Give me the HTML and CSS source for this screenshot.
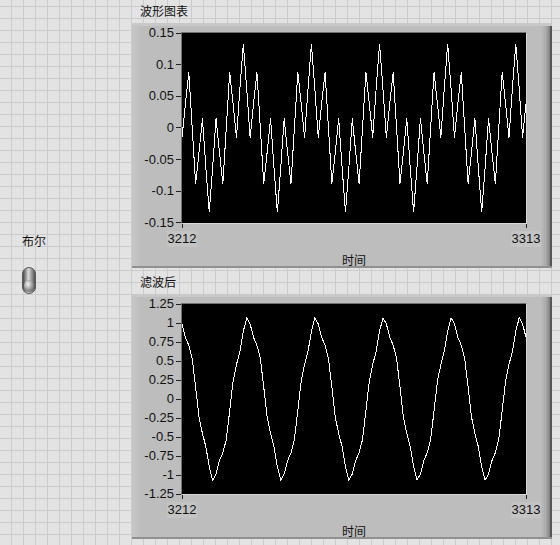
FILE: index.html
```html
<!DOCTYPE html>
<html lang="zh">
<head>
<meta charset="utf-8">
<title>前面板</title>
<link rel="stylesheet" href="styles.css">
</head>
<body>
<div class="panel">
  <div class="side">
    <div class="bool-label">布尔</div>
    <svg class="toggle" viewBox="0 0 14 27" width="14" height="27">
      <defs>
        <linearGradient id="metal" x1="0" x2="1" y1="0" y2="0">
          <stop offset="0" stop-color="#3a3a3a"/>
          <stop offset="0.45" stop-color="#dadada"/>
          <stop offset="1" stop-color="#484848"/>
        </linearGradient>
        <radialGradient id="knob" cx="0.4" cy="0.35" r="0.7">
          <stop offset="0" stop-color="#f4f4f4"/>
          <stop offset="1" stop-color="#666"/>
        </radialGradient>
      </defs>
      <rect x="0.5" y="0.5" width="13" height="26" rx="6.5" fill="url(#metal)" stroke="#5a5a5a"/>
      <ellipse cx="7" cy="19" rx="5" ry="6" fill="url(#knob)"/>
    </svg>
  </div>
  <div class="charts">
    <section class="chart">
      <div class="chart-label">波形图表</div>
      <div class="frame">
        <div class="yaxis">
          <div class="ylab">0.15</div>
          <div class="ylab">0.1</div>
          <div class="ylab">0.05</div>
          <div class="ylab">0</div>
          <div class="ylab">-0.05</div>
          <div class="ylab">-0.1</div>
          <div class="ylab">-0.15</div>
        </div>
        <div class="plot">
          <svg viewBox="0 0 344 190" width="344" height="190">
            <polyline id="line1" class="trace" points=""/>
          </svg>
        </div>
        <div class="xaxis">
          <div class="xlab"><span>3212</span></div>
          <div class="xlab"><span>3313</span></div>
        </div>
        <div class="xtitle">时间</div>
      </div>
    </section>
    <section class="chart">
      <div class="chart-label">滤波后</div>
      <div class="frame">
        <div class="yaxis">
          <div class="ylab">1.25</div>
          <div class="ylab">1</div>
          <div class="ylab">0.75</div>
          <div class="ylab">0.5</div>
          <div class="ylab">0.25</div>
          <div class="ylab">0</div>
          <div class="ylab">-0.25</div>
          <div class="ylab">-0.5</div>
          <div class="ylab">-0.75</div>
          <div class="ylab">-1</div>
          <div class="ylab">-1.25</div>
        </div>
        <div class="plot">
          <svg viewBox="0 0 344 190" width="344" height="190">
            <polyline id="line2" class="trace" points=""/>
          </svg>
        </div>
        <div class="xaxis">
          <div class="xlab"><span>3212</span></div>
          <div class="xlab"><span>3313</span></div>
        </div>
        <div class="xtitle">时间</div>
      </div>
    </section>
  </div>
</div>
<script src="script.js"></script>
</body>
</html>
```

FILE: styles.css
```css
* { box-sizing: border-box; }
html, body { margin: 0; padding: 0; }
body {
  width: 560px;
  height: 545px;
  overflow: hidden;
  background-color: #e3e3e3;
  background-image:
    linear-gradient(to right, #cbcbcb 1px, transparent 1px),
    linear-gradient(to bottom, #cbcbcb 1px, transparent 1px);
  background-size: 12px 12px;
  background-position: 11px 6px;
  font-family: "Liberation Sans", Arial, sans-serif;
  color: #111;
}
.panel { display: flex; }
.side { width: 132px; padding: 234px 0 0 22px; }
.bool-label,
.chart-label,
.xtitle {
  font-family: "Noto Sans CJK SC", "Noto Sans", sans-serif;
  font-size: 12px;
  line-height: 14px;
}
.toggle { display: block; margin-top: 19px; }
.charts {
  width: 420px;
  display: flex;
  flex-direction: column;
  gap: 3px;
}
.chart-label { height: 23px; padding: 4px 0 0 8px; }
.frame {
  height: 245px;
  display: grid;
  grid-template-columns: 49px 346px 1fr;
  grid-template-rows: 9px 192px auto auto;
  background-color: #bdbdbd;
  background-image:
    linear-gradient(to right, rgba(0,0,0,0) calc(100% - 11px), rgba(0,0,0,.10) calc(100% - 6px), rgba(0,0,0,.32) calc(100% - 2px), rgba(0,0,0,.55) calc(100% - 2px), rgba(0,0,0,.55) 100%),
    linear-gradient(to right, #c7c7c7 0, #bdbdbd 9px);
  box-shadow: inset 0 3px 0 #c8c8c8, inset 0 -2px 0 #909090;
}
.yaxis {
  grid-column: 1;
  grid-row: 2;
  margin: -7px 0;
  display: flex;
  flex-direction: column;
  justify-content: space-between;
  font-size: 13px;
  line-height: 16px;
}
.ylab {
  height: 16px;
  display: flex;
  justify-content: flex-end;
  align-items: center;
}
.ylab::after {
  content: "";
  width: 5px;
  height: 1px;
  margin-left: 2px;
  background: #222;
}
.plot {
  grid-column: 2;
  grid-row: 2;
  border: 1px solid;
  border-color: #707070 #d6d6d6 #d6d6d6 #707070;
  background: #000;
}
.plot svg { display: block; overflow: visible; }
.trace {
  fill: none;
  stroke: #fff;
  stroke-width: 1;
  shape-rendering: crispEdges;
}
.xaxis {
  grid-column: 2;
  grid-row: 3;
  margin: 0 -14px;
  display: flex;
  justify-content: space-between;
}
.xlab {
  width: 30px;
  display: flex;
  flex-direction: column;
  align-items: center;
  font-size: 13px;
  line-height: 16px;
}
.xlab::before {
  content: "";
  width: 1px;
  height: 4px;
  margin-bottom: 3px;
  background: #222;
}
.xlab span { background: #c4c4c4; padding: 0 1px; }
.xtitle {
  grid-column: 2;
  grid-row: 4;
  margin-top: 5px;
  text-align: center;
}
```

FILE: script.js
```js
(function () {
  function build(id, f, vmax, vmin) {
    var pts = [];
    for (var n = 0; n <= 101; n++) {
      var x = n * 344 / 101;
      var y = (vmax - f(n)) / (vmax - vmin) * 190;
      pts.push(x.toFixed(2) + "," + y.toFixed(2));
    }
    document.getElementById(id).setAttribute("points", pts.join(" "));
  }
  var TAU = Math.PI * 2;
  function raw(n) {
    return 0.0652 * Math.cos(TAU * (n - 18) / 20) + 0.0678 * Math.cos(Math.PI * (n - 18) / 2);
  }
  function filtered(n) {
    return Math.cos(TAU * (n - 19.5) / 20) + 0.08 * Math.cos(Math.PI * (n - 19) / 2);
  }
  build("line1", raw, 0.15, -0.15);
  build("line2", filtered, 1.25, -1.25);
})();
```
